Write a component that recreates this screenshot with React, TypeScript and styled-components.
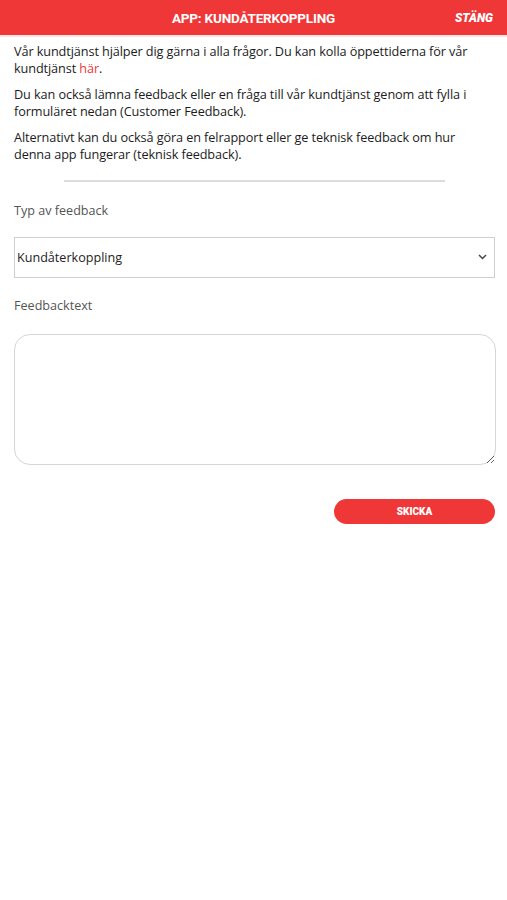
import React, { useState } from "react";
import styled, { createGlobalStyle } from "styled-components";

const GlobalStyle = createGlobalStyle`
    html, body {
        margin: 0;
        padding: 0;
        background: #ffffff;
    }
    body {
        font-family: "Open Sans", "Noto Sans", sans-serif;
        color: #1a1a1a;
    }
`;

const Page = styled.div`
    display: flex;
    flex-direction: column;
    width: 507px;
    min-height: 900px;
    background: #ffffff;
`;

const Header = styled.header`
    display: grid;
    grid-template-columns: 80px 1fr 80px;
    align-items: center;
    height: 35px;
    background-color: #ef3737;
    border-bottom: 2px solid #fbe3e3;
    color: #ffffff;

    h1 {
        grid-column: 2;
        margin: 0;
        text-align: center;
        font-family: Roboto, sans-serif;
        font-size: 13.5px;
        font-weight: 700;
        letter-spacing: -0.2px;
    }
`;

const CloseButton = styled.button`
    justify-self: end;
    margin-right: 14px;
    padding: 0;
    border: none;
    background: none;
    color: #ffffff;
    font-family: Roboto, sans-serif;
    font-size: 12px;
    font-weight: 900;
    font-style: italic;
    cursor: pointer;
`;

const Content = styled.main`
    display: flex;
    flex-direction: column;
    padding: 6px 12px 0 14px;
`;

const Paragraph = styled.p`
    margin: 0 0 9px;
    font-size: 12.7px;
    line-height: 17px;
    letter-spacing: -0.1px;
    color: #1c1c1c;

    a {
        color: #ef3737;
        text-decoration: none;
    }
`;

const Divider = styled.hr`
    width: 381px;
    margin: 8px auto 20px;
    border: none;
    border-top: 2px solid #dcdcdc;
`;

const Label = styled.label<{ gap: number }>`
    display: block;
    margin-bottom: ${(props) => props.gap}px;
    font-size: 12.6px;
    color: #555555;
`;

const SelectWrap = styled.div`
    position: relative;
    margin-bottom: 19px;

    svg {
        position: absolute;
        right: 8px;
        top: 17px;
        pointer-events: none;
    }
`;

const Select = styled.select`
    width: 481px;
    height: 41px;
    padding: 0 2px;
    border: 1px solid #cfcfcf;
    border-radius: 0;
    background: #ffffff;
    appearance: none;
    font-family: "Open Sans", "Noto Sans", sans-serif;
    font-size: 12.6px;
    color: #222222;
    outline: none;
`;

const TextArea = styled.textarea`
    box-sizing: border-box;
    width: 482px;
    height: 131px;
    padding: 10px;
    border: 1px solid #d6d6d6;
    border-radius: 16px;
    font-family: "Open Sans", "Noto Sans", sans-serif;
    font-size: 13px;
    outline: none;
    resize: vertical;
`;

const Actions = styled.div`
    display: flex;
    justify-content: flex-end;
    margin-top: 34px;
`;

const SubmitButton = styled.button`
    width: 161px;
    height: 25px;
    border: none;
    border-radius: 13px;
    background-color: #ef3737;
    color: #ffffff;
    font-family: Roboto, sans-serif;
    font-size: 10px;
    font-weight: 900;
    cursor: pointer;
`;

const Chevron = () => (
    <svg width="9" height="6" viewBox="0 0 9 6">
        <path d="M1 1 L4.5 4.5 L8 1" fill="none" stroke="#444" strokeWidth="1.5" />
    </svg>
);

const App = () => {
    const [type, setType] = useState("kund");
    const [text, setText] = useState("");

    return (
        <Page>
            <GlobalStyle />
            <Header>
                <h1>APP: KUNDÅTERKOPPLING</h1>
                <CloseButton>STÄNG</CloseButton>
            </Header>
            <Content>
                <Paragraph>
                    Vår kundtjänst hjälper dig gärna i alla frågor. Du kan kolla öppettiderna för vår
                    <br />
                    kundtjänst <a href="#">här</a>.
                </Paragraph>
                <Paragraph>
                    Du kan också lämna feedback eller en fråga till vår kundtjänst genom att fylla i
                    <br />
                    formuläret nedan (Customer Feedback).
                </Paragraph>
                <Paragraph>
                    Alternativt kan du också göra en felrapport eller ge teknisk feedback om hur
                    <br />
                    denna app fungerar (teknisk feedback).
                </Paragraph>
                <Divider />
                <Label htmlFor="type" gap={18}>
                    Typ av feedback
                </Label>
                <SelectWrap>
                    <Select id="type" value={type} onChange={(e) => setType(e.target.value)}>
                        <option value="kund">Kundåterkoppling</option>
                        <option value="teknisk">Teknisk feedback</option>
                    </Select>
                    <Chevron />
                </SelectWrap>
                <Label htmlFor="text" gap={20}>
                    Feedbacktext
                </Label>
                <TextArea id="text" value={text} onChange={(e) => setText(e.target.value)} />
                <Actions>
                    <SubmitButton>SKICKA</SubmitButton>
                </Actions>
            </Content>
        </Page>
    );
};

export default App;
